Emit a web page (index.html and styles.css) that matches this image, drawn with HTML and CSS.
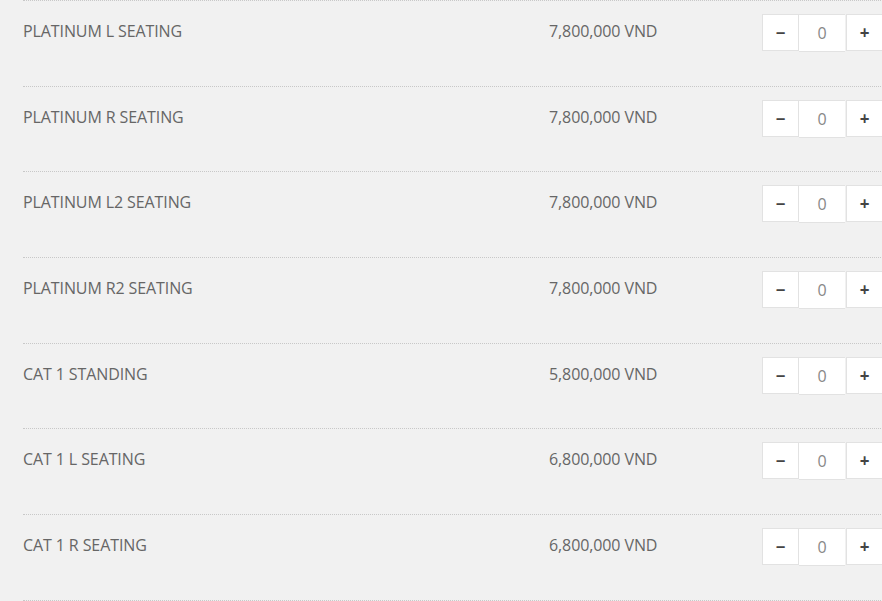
FILE: index.html
```html
<!DOCTYPE html>
<html>
<head>
<meta charset="utf-8">
<link rel="stylesheet" href="styles.css">
</head>
<body>
<div class="list">
  <div class="row"><div class="name">PLATINUM L SEATING</div><div class="price">7,800,000 VND</div><div class="qty"><button class="btn">&minus;</button><span class="num">0</span><button class="btn">+</button></div></div>
  <div class="row"><div class="name">PLATINUM R SEATING</div><div class="price">7,800,000 VND</div><div class="qty"><button class="btn">&minus;</button><span class="num">0</span><button class="btn">+</button></div></div>
  <div class="row"><div class="name">PLATINUM L2 SEATING</div><div class="price">7,800,000 VND</div><div class="qty"><button class="btn">&minus;</button><span class="num">0</span><button class="btn">+</button></div></div>
  <div class="row"><div class="name">PLATINUM R2 SEATING</div><div class="price">7,800,000 VND</div><div class="qty"><button class="btn">&minus;</button><span class="num">0</span><button class="btn">+</button></div></div>
  <div class="row"><div class="name">CAT 1 STANDING</div><div class="price">5,800,000 VND</div><div class="qty"><button class="btn">&minus;</button><span class="num">0</span><button class="btn">+</button></div></div>
  <div class="row"><div class="name">CAT 1 L SEATING</div><div class="price">6,800,000 VND</div><div class="qty"><button class="btn">&minus;</button><span class="num">0</span><button class="btn">+</button></div></div>
  <div class="row"><div class="name">CAT 1 R SEATING</div><div class="price">6,800,000 VND</div><div class="qty"><button class="btn">&minus;</button><span class="num">0</span><button class="btn">+</button></div></div>
</div>
</body>
</html>
```
FILE: styles.css
```css
html, body {
  margin: 0;
  padding: 0;
  background: #f1f1f1;
  overflow: hidden;
  width: 882px;
  height: 601px;
}
.list {
  margin-left: 23px;
  width: 870px;
  border-top: 1px dotted #c8c8c8;
  font-family: "Open Sans", "Liberation Sans", sans-serif;
}
.row {
  box-sizing: border-box;
  height: 85.7px;
  border-bottom: 1px dotted #c8c8c8;
  display: grid;
  grid-template-columns: 526px 213px 140px;
  align-items: start;
  padding-top: 13px;
}
.name, .price {
  font-size: 16px;
  letter-spacing: -0.1px;
  color: #666;
  line-height: 34px;
}
.qty {
  display: flex;
}
.btn, .num {
  box-sizing: border-box;
  height: 37px;
  background: #fff;
  border: 1px solid #e2e2e2;
  display: flex;
  align-items: center;
  justify-content: center;
  font-family: "Open Sans", "Liberation Sans", sans-serif;
  padding: 0;
}
.btn {
  width: 37px;
  font-size: 17px;
  font-weight: 700;
  color: #444;
}
.num {
  width: 46px;
  height: 38px;
  border-left: none;
  border-right: none;
  font-size: 16px;
  color: #888;
}
.btn + .num + .btn {
  margin-left: 1px;
}
```
